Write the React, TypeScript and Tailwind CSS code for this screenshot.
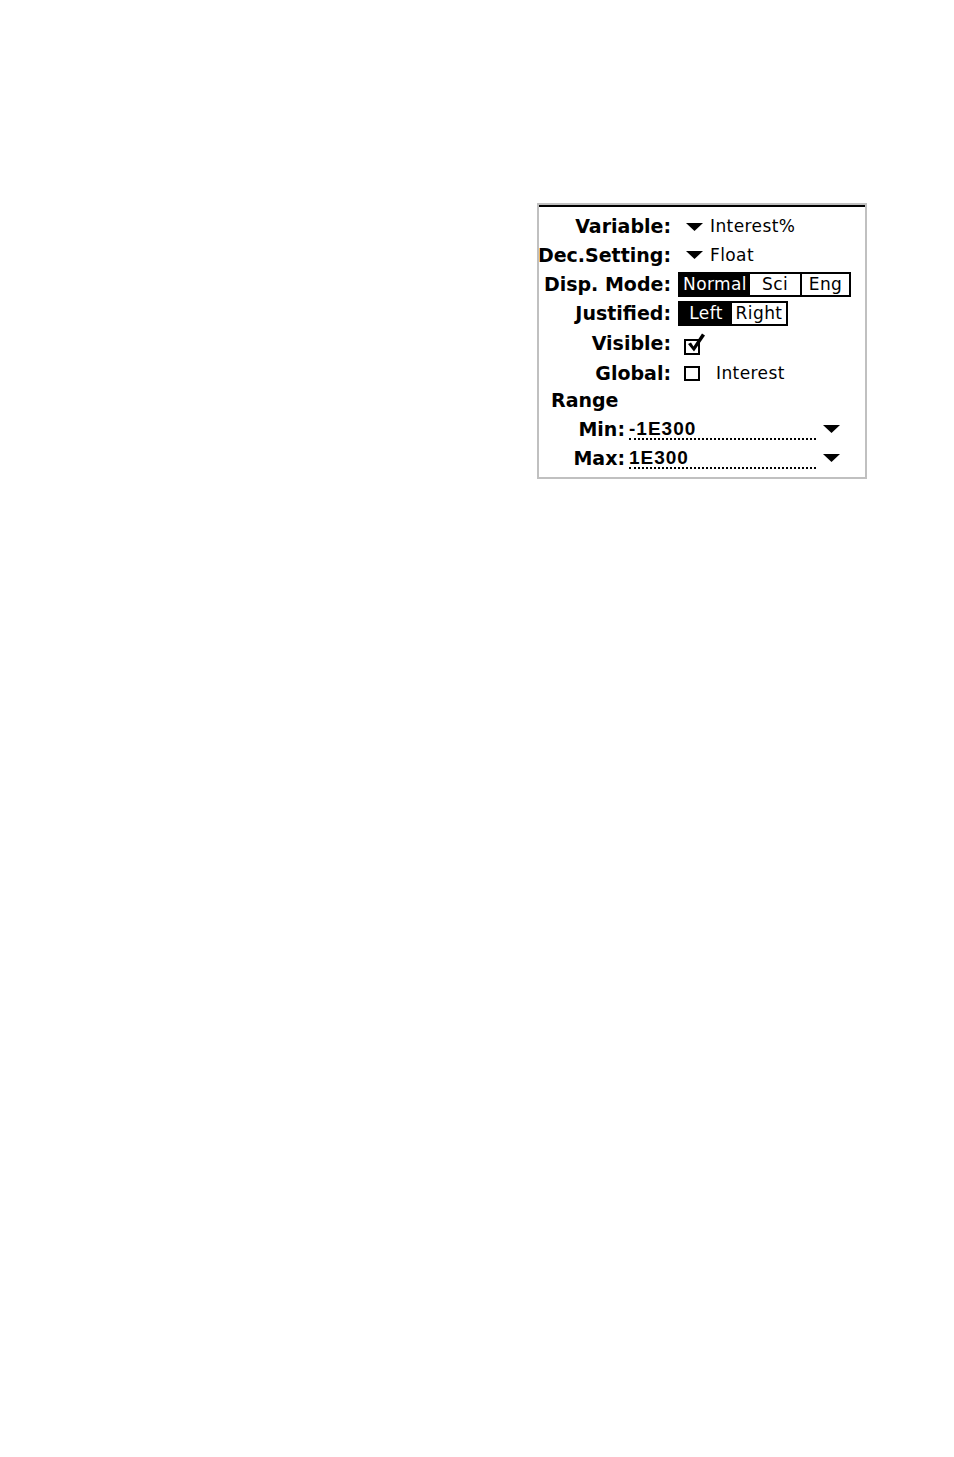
import React from 'react';

const labelCls = "font-['DejaVu_Sans',sans-serif] font-bold text-[19px] leading-none text-black whitespace-nowrap";
const textCls = "font-['DejaVu_Sans',sans-serif] text-[17px] leading-none tracking-[0.4px] whitespace-nowrap";
const numCls = "font-['Liberation_Sans',sans-serif] font-bold text-[19px] leading-none tracking-[1px] whitespace-nowrap";

function Arrow() {
  return (
    <svg width="17" height="8" viewBox="0 0 17 8" className="block shrink-0">
      <polygon points="0,0 17,0 8.5,8" fill="black" />
    </svg>
  );
}

function Row({ label, h, children }: { label: string; h: string; children?: React.ReactNode }) {
  return (
    <div className={`flex items-center ${h}`}>
      <div className={`w-[132px] flex justify-end ${labelCls}`}>{label}</div>
      <div className="ml-[7px] flex items-center">{children}</div>
    </div>
  );
}

function RangeRow({ label, value, h }: { label: string; value: string; h: string }) {
  return (
    <div className={`flex items-center ${h}`}>
      <div className={`w-[86px] flex justify-end ${labelCls}`}>{label}</div>
      <div className={`ml-[4px] w-[187px] h-[22px] flex items-center border-b-2 border-dotted border-black ${numCls}`}>
        {value}
      </div>
      <div className="ml-[7px]">
        <Arrow />
      </div>
    </div>
  );
}

export default function App() {
  return (
    <div className="min-h-screen bg-white pt-[203px] pl-[537px]">
      <div className="w-[330px] h-[276px] border-2 border-[#c0c0c0] bg-white">
        <div className="border-t-2 border-black pt-[5px]">
          <Row label="Variable:" h="h-[29px]">
            <div className="ml-[8px]">
              <Arrow />
            </div>
            <span className={`ml-[7px] ${textCls}`}>Interest%</span>
          </Row>
          <Row label="Dec.Setting:" h="h-[28px]">
            <div className="ml-[8px]">
              <Arrow />
            </div>
            <span className={`ml-[7px] ${textCls}`}>Float</span>
          </Row>
          <Row label="Disp. Mode:" h="h-[31px]">
            <div className={`flex h-[25px] border-2 border-black ${textCls}`}>
              <div className="w-[70px] bg-black text-white flex items-center justify-center">Normal</div>
              <div className="w-[50px] flex items-center justify-center">Sci</div>
              <div className="w-[49px] border-l-2 border-black flex items-center justify-center">Eng</div>
            </div>
          </Row>
          <Row label="Justified:" h="h-[27px]">
            <div className={`flex h-[25px] border-2 border-black ${textCls}`}>
              <div className="w-[52px] bg-black text-white flex items-center justify-center">Left</div>
              <div className="w-[54px] flex items-center justify-center">Right</div>
            </div>
          </Row>
          <Row label="Visible:" h="h-[33px]">
            <svg width="22" height="22" viewBox="0 0 22 22" className="block ml-[6px] overflow-visible">
              <rect x="1" y="7" width="14" height="14" fill="white" stroke="black" strokeWidth="2" />
              <polygon points="4,11 7,9.5 9.5,13.5 18,0.5 21,2.5 10,18.5" fill="black" />
            </svg>
          </Row>
          <Row label="Global:" h="h-[27px]">
            <svg width="16" height="16" viewBox="0 0 16 16" className="block ml-[6px]">
              <rect x="1" y="1" width="14" height="13" fill="white" stroke="black" strokeWidth="2" />
            </svg>
            <span className={`ml-[16px] ${textCls}`}>Interest</span>
          </Row>
          <div className={`flex items-center h-[27px] pl-[12px] ${labelCls}`}>Range</div>
          <RangeRow label="Min:" value="-1E300" h="h-[30px]" />
          <RangeRow label="Max:" value="1E300" h="h-[28px]" />
        </div>
      </div>
    </div>
  );
}
